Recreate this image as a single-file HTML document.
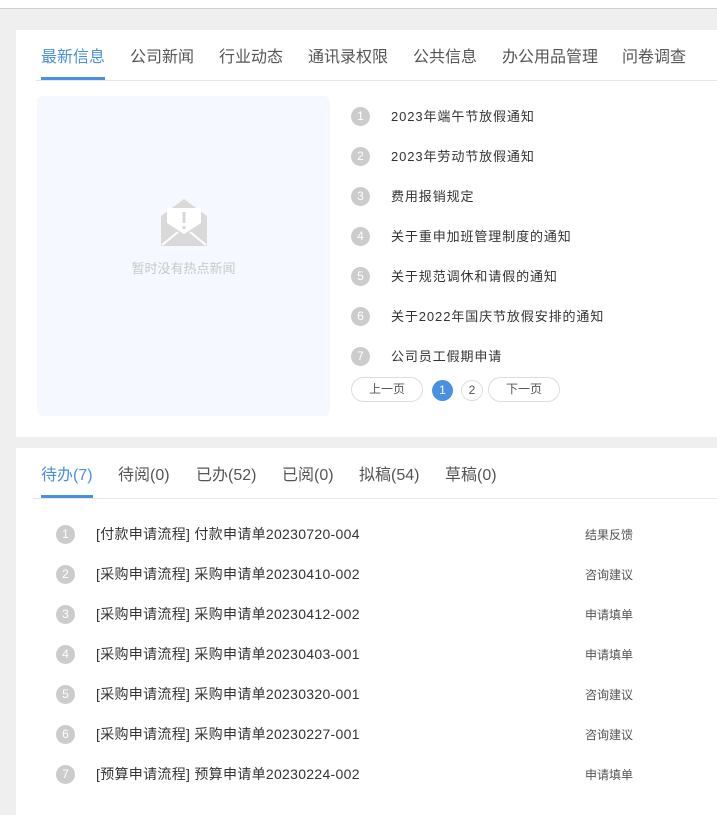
<!DOCTYPE html>
<html><head><meta charset="utf-8"><style>
*{margin:0;padding:0;box-sizing:border-box}
body{width:717px;height:815px;background:#efefef;font-family:"Liberation Sans","Noto Sans CJK SC",sans-serif;position:relative;overflow:hidden;color:#333}
.top{position:absolute;left:0;top:0;width:717px;height:9px;background:#fff;border-bottom:1px solid #cfcfcf}
.card{position:absolute;left:16px;width:701px;background:#fff}
.tab{position:absolute;font-size:16px;color:#555;white-space:nowrap}
.tab.on{color:#4a90e2}
.ul{position:absolute;height:3px;background:#4a90e2}
.bl{position:absolute;left:17px;right:0;height:1px;background:#e6e6e6}
.num{position:absolute;width:19px;height:19px;border-radius:50%;background:#ccc;color:#fff;font-size:12px;text-align:center;line-height:19px}
.t{position:absolute;font-size:13px;color:#333;white-space:nowrap;letter-spacing:0.9px}
.t2{position:absolute;font-size:14px;color:#333;white-space:nowrap;letter-spacing:0.3px}
.tag{position:absolute;font-size:12px;color:#555;white-space:nowrap}
.pb{position:absolute;border:1px solid #ddd;border-radius:13px;height:25px;font-size:12px;color:#555;text-align:center;line-height:23px;background:#fff}
</style></head><body>
<div class="top"></div>
<div class="card" style="top:30px;height:407px">
 <div class="tab on" style="left:25px;top:13px">最新信息</div>
 <div class="tab" style="left:114px;top:13px">公司新闻</div>
 <div class="tab" style="left:203px;top:13px">行业动态</div>
 <div class="tab" style="left:292px;top:13px">通讯录权限</div>
 <div class="tab" style="left:397px;top:13px">公共信息</div>
 <div class="tab" style="left:486px;top:13px">办公用品管理</div>
 <div class="tab" style="left:606px;top:13px">问卷调查</div>
 <div class="bl" style="top:50px;left:20px"></div>
 <div class="ul" style="left:25px;width:64px;top:47px"></div>
 <div style="position:absolute;left:21px;top:66px;width:293px;height:320px;background:#f5f8fe;border-radius:6px">
  <svg style="position:absolute;left:121px;top:100px" width="52" height="52" viewBox="0 0 52 52">
   <path d="M3 20 L26 3 L49 20 L49 50 L3 50 Z" fill="#d9d9d9"/>
   <path d="M9 12 L43 12 L43 27 L26 38 L9 27 Z" fill="#fff"/>
   <rect x="24.5" y="16" width="3" height="11" fill="#d9d9d9"/>
   <rect x="24.5" y="30" width="3" height="3" fill="#d9d9d9"/>
   <path d="M4 49 L20 36 M48 49 L32 36" stroke="#fff" stroke-width="2"/>
  </svg>
  <div style="position:absolute;left:0;width:293px;top:162px;text-align:center;font-size:13px;color:#c8c8c8">暂时没有热点新闻</div>
 </div>
 <div class="num" style="left:335px;top:77px">1</div><div class="t" style="left:375px;top:76px">2023年端午节放假通知</div>
 <div class="num" style="left:335px;top:117px">2</div><div class="t" style="left:375px;top:116px">2023年劳动节放假通知</div>
 <div class="num" style="left:335px;top:157px">3</div><div class="t" style="left:375px;top:156px">费用报销规定</div>
 <div class="num" style="left:335px;top:197px">4</div><div class="t" style="left:375px;top:196px">关于重申加班管理制度的通知</div>
 <div class="num" style="left:335px;top:237px">5</div><div class="t" style="left:375px;top:236px">关于规范调休和请假的通知</div>
 <div class="num" style="left:335px;top:277px">6</div><div class="t" style="left:375px;top:276px">关于2022年国庆节放假安排的通知</div>
 <div class="num" style="left:335px;top:317px">7</div><div class="t" style="left:375px;top:316px">公司员工假期申请</div>
 <div class="pb" style="left:335px;top:347px;width:72px">上一页</div>
 <div class="num" style="left:416px;top:350px;width:21px;height:21px;line-height:21px;background:#4a90e2">1</div>
 <div class="num" style="left:445px;top:350px;width:22px;height:21px;line-height:19px;background:#fff;border:1px solid #ddd;color:#555">2</div>
 <div class="pb" style="left:472px;top:347px;width:72px">下一页</div>
</div>
<div class="card" style="top:448px;height:367px">
 <div class="tab on" style="left:25px;top:13px">待办(7)</div>
 <div class="tab" style="left:102px;top:13px">待阅(0)</div>
 <div class="tab" style="left:180px;top:13px">已办(52)</div>
 <div class="tab" style="left:266px;top:13px">已阅(0)</div>
 <div class="tab" style="left:343px;top:13px">拟稿(54)</div>
 <div class="tab" style="left:429px;top:13px">草稿(0)</div>
 <div class="bl" style="top:50px;left:17px"></div>
 <div class="ul" style="left:25px;width:52px;top:47px"></div>
 <div class="num" style="left:40px;top:77px">1</div><div class="t2" style="left:80px;top:76px">[付款申请流程] 付款申请单20230720-004</div><div class="tag" style="left:569px;top:78px">结果反馈</div>
 <div class="num" style="left:40px;top:117px">2</div><div class="t2" style="left:80px;top:116px">[采购申请流程] 采购申请单20230410-002</div><div class="tag" style="left:569px;top:118px">咨询建议</div>
 <div class="num" style="left:40px;top:157px">3</div><div class="t2" style="left:80px;top:156px">[采购申请流程] 采购申请单20230412-002</div><div class="tag" style="left:569px;top:158px">申请填单</div>
 <div class="num" style="left:40px;top:197px">4</div><div class="t2" style="left:80px;top:196px">[采购申请流程] 采购申请单20230403-001</div><div class="tag" style="left:569px;top:198px">申请填单</div>
 <div class="num" style="left:40px;top:237px">5</div><div class="t2" style="left:80px;top:236px">[采购申请流程] 采购申请单20230320-001</div><div class="tag" style="left:569px;top:238px">咨询建议</div>
 <div class="num" style="left:40px;top:277px">6</div><div class="t2" style="left:80px;top:276px">[采购申请流程] 采购申请单20230227-001</div><div class="tag" style="left:569px;top:278px">咨询建议</div>
 <div class="num" style="left:40px;top:317px">7</div><div class="t2" style="left:80px;top:316px">[预算申请流程] 预算申请单20230224-002</div><div class="tag" style="left:569px;top:318px">申请填单</div>
</div>
</body></html>
